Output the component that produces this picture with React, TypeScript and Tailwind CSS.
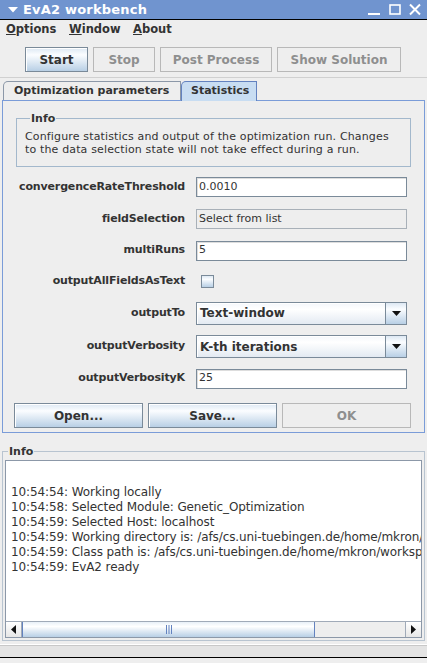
import React from "react";

const btnOn =
  "flex items-center justify-center h-[25px] border border-[#7a8a99] bg-[linear-gradient(to_bottom,#dde8f3_0%,#fbfdff_30%,#b8cfe5_100%)] text-[12px] font-bold text-[#333333] shadow-[inset_1px_1px_0_#ffffff]";
const btnOff =
  "flex items-center justify-center h-[25px] border border-[#b8b8b8] bg-[#eeeeee] text-[12px] font-bold text-[#8e8f8f]";
const field =
  "h-[20px] w-[211px] border border-[#7a8a99] bg-white flex items-center pl-[2px] text-[11px] text-[#333333] shadow-[inset_1px_1px_0_#dddddd]";

function Arrow() {
  return (
    <div className="w-[21px] h-full border-l border-[#7a8a99] bg-[linear-gradient(to_bottom,#dde8f3_0%,#fbfdff_30%,#b8cfe5_100%)] flex items-center justify-center">
      <svg width="9" height="5" viewBox="0 0 9 5">
        <path d="M0 0H9L4.5 5Z" fill="#111111" />
      </svg>
    </div>
  );
}

function Combo({ text }: { text: string }) {
  return (
    <div className="h-[23px] w-[211px] border border-[#7a8a99] flex">
      <div className="flex-1 flex items-center pl-[3px] text-[12px] font-bold text-[#333333] bg-[linear-gradient(to_bottom,#f4f7fb_0%,#ffffff_30%,#e3eaf2_100%)] shadow-[inset_1px_1px_0_#ffffff]">
        {text}
      </div>
      <Arrow />
    </div>
  );
}

function Row({ label, h, children }: { label: string; h: string; children: React.ReactNode }) {
  return (
    <div className={`flex items-center ${h}`}>
      <div className="w-[182px] text-right text-[11px] font-bold text-[#333333] whitespace-nowrap tracking-[-0.15px]">{label}</div>
      <div className="ml-[11px]">{children}</div>
    </div>
  );
}

export default function App() {
  const log = [
    "10:54:54: Working locally",
    "10:54:58: Selected Module: Genetic_Optimization",
    "10:54:59: Selected Host: localhost",
    "10:54:59: Working directory is: /afs/cs.uni-tuebingen.de/home/mkron/workspace/EvA2",
    "10:54:59: Class path is: /afs/cs.uni-tuebingen.de/home/mkron/workspace/EvA2/build",
    "10:54:59: EvA2 ready",
  ];
  return (
    <div className="w-[427px] h-[663px] bg-[#eeeeee] flex flex-col overflow-hidden font-['DejaVu_Sans',sans-serif] text-[#333333]">
      {/* Title bar */}
      <div className="h-[20px] shrink-0 bg-[#7094cf] border-b border-black flex items-center">
        <svg width="10" height="6" viewBox="0 0 10 6" className="ml-[8px] shrink-0">
          <path d="M0 0H10L5 5.5Z" fill="white" />
        </svg>
        <span className="ml-[5px] shrink-0 text-white font-bold text-[13px] leading-none tracking-[0.2px] whitespace-nowrap">EvA2 workbench</span>
        <svg width="57" height="19" viewBox="0 0 57 19" className="ml-auto mr-[4px] shrink-0">
          <rect x="2" y="13" width="12" height="2" fill="white" />
          <rect x="24" y="5" width="10" height="9" fill="none" stroke="white" strokeWidth="1.6" />
          <path d="M44 4.5L54 14.5M54 4.5L44 14.5" stroke="white" strokeWidth="2" />
        </svg>
      </div>

      {/* Menu bar */}
      <div className="h-[20px] shrink-0 flex items-center pl-[6px] text-[11.5px] font-bold text-[#333333]">
        <span className="w-[63px]"><span className="underline">O</span>ptions</span>
        <span className="w-[64px]"><span className="underline">W</span>indow</span>
        <span><span className="underline">A</span>bout</span>
      </div>

      {/* Buttons */}
      <div className="shrink-0 pt-[7px] pl-[25px] flex gap-[5px]">
        <div className={`${btnOn} w-[63px]`}>Start</div>
        <div className={`${btnOff} w-[62px]`}>Stop</div>
        <div className={`${btnOff} w-[112px]`}>Post Process</div>
        <div className={`${btnOff} w-[124px]`}>Show Solution</div>
      </div>

      <div className="shrink-0 mt-[5px] h-[1px] bg-[#d0d0d0]" />

      {/* Tabs */}
      <div className="shrink-0 mt-[3px] h-[20px] flex items-end pl-[3px] relative z-10 -mb-px">
        <div className="w-[178px] h-[19px] border border-b-0 border-[#8c98a8] rounded-tl-[5px] bg-[#eeeeee] flex items-center pl-[10px] text-[11px] font-bold text-[#333333] whitespace-nowrap mb-px">
          Optimization parameters
        </div>
        <div className="w-[76px] h-[20px] border border-b-0 border-[#6382bf] rounded-tl-[5px] bg-[#c8ddf2] flex items-center pl-[9px] text-[11px] font-bold text-[#333333] whitespace-nowrap">
          Statistics
        </div>
      </div>

      {/* Tab panel */}
      <div className="shrink-0 mx-[2px] h-[333px] border border-[#7a9cd8] flex flex-col">
        <fieldset className="min-w-0 ml-[13px] mt-[11px] w-[395px] border border-[#a3b8cc] pl-[8px] pt-[5px] pb-[10px]">
          <legend className="ml-[5px] px-[1px] text-[11px] font-bold leading-[13px] text-[#333333]">Info</legend>
          <div className="text-[11px] leading-[13px] text-[#333333] whitespace-nowrap tracking-[0.15px]">
            Configure statistics and output of the optimization run. Changes
            <br />
            to the data selection state will not take effect during a run.
          </div>
        </fieldset>

        <div className="mt-[4px] flex flex-col">
          <Row label="convergenceRateThreshold" h="h-[32px]">
            <div className={field}>0.0010</div>
          </Row>
          <Row label="fieldSelection" h="h-[32px]">
            <div className="h-[20px] w-[211px] border border-[#a8b0b8] bg-[#eeeeee] flex items-center pl-[2px] text-[11px] text-[#333333]">
              Select from list
            </div>
          </Row>
          <Row label="multiRuns" h="h-[31px]">
            <div className={field}>5</div>
          </Row>
          <Row label="outputAllFieldsAsText" h="h-[30px]">
            <div className="ml-[5px] w-[13px] h-[13px] border border-[#7a8a99] bg-[linear-gradient(to_bottom,#dde8f3_0%,#fbfdff_30%,#b8cfe5_100%)]" />
          </Row>
          <Row label="outputTo" h="h-[34px]">
            <Combo text="Text-window" />
          </Row>
          <Row label="outputVerbosity" h="h-[33px]">
            <Combo text="K-th iterations" />
          </Row>
          <Row label="outputVerbosityK" h="h-[31px]">
            <div className={field}>25</div>
          </Row>
        </div>

        <div className="mt-[9px] ml-[11px] flex gap-[5px]">
          <div className={`${btnOn} w-[129px]`}>Open...</div>
          <div className={`${btnOn} w-[129px]`}>Save...</div>
          <div className={`${btnOff} w-[129px]`}>OK</div>
        </div>
      </div>

      {/* Info log group */}
      <fieldset className="min-w-0 shrink-0 mt-[12px] mx-[2px] w-[423px] border border-[#b8c4d0] px-[2px] pt-[2px] pb-[2px]">
        <legend className="ml-[3px] px-[1px] text-[11px] font-bold leading-[13px] text-[#333333]">Info</legend>
        <div className="h-[178px] border border-[#8c98a8] bg-white flex flex-col min-w-0">
          <div className="flex-1 overflow-hidden pt-[9px] pl-[5px] text-[12px] leading-[15px] text-[#333333] whitespace-nowrap tracking-[-0.1px]">
            <div>&nbsp;</div>
            {log.map((l, i) => (
              <div key={i}>{l}</div>
            ))}
          </div>
          <div className="h-[16px] shrink-0 flex border-t border-[#a0aab8] bg-[#eeeeee]">
            <div className="w-[16px] h-full bg-[linear-gradient(to_bottom,#ffffff_0%,#e6e6e6_100%)] border-r border-[#a0aab8] flex items-center justify-center">
              <svg width="5" height="9" viewBox="0 0 5 9">
                <path d="M5 0V9L0 4.5Z" fill="#111111" />
              </svg>
            </div>
            <div className="w-[293px] h-full border-x border-[#6382bf] bg-[linear-gradient(to_bottom,#e8f0f8_0%,#ffffff_30%,#b8cfe5_100%)] flex items-center justify-center">
              <svg width="6" height="9" viewBox="0 0 6 9">
                <rect x="0" y="0" width="1" height="9" fill="#6382bf" />
                <rect x="2.5" y="0" width="1" height="9" fill="#6382bf" />
                <rect x="5" y="0" width="1" height="9" fill="#6382bf" />
              </svg>
            </div>
            <div className="flex-1" />
            <div className="w-[16px] h-full bg-[linear-gradient(to_bottom,#ffffff_0%,#e6e6e6_100%)] border-l border-[#a0aab8] flex items-center justify-center">
              <svg width="5" height="9" viewBox="0 0 5 9">
                <path d="M0 0V9L5 4.5Z" fill="#111111" />
              </svg>
            </div>
          </div>
        </div>
      </fieldset>

      {/* Status bar */}
      <div className="shrink-0 mt-[3px] h-[13px] border-t border-[#ffffff] bg-[#e4e4e4] shadow-[inset_0_1px_0_#c8c8c8]" />
      <div className="shrink-0 h-[1px] bg-black" />
      <div className="flex-1 bg-[#eeeeee]" />
    </div>
  );
}
